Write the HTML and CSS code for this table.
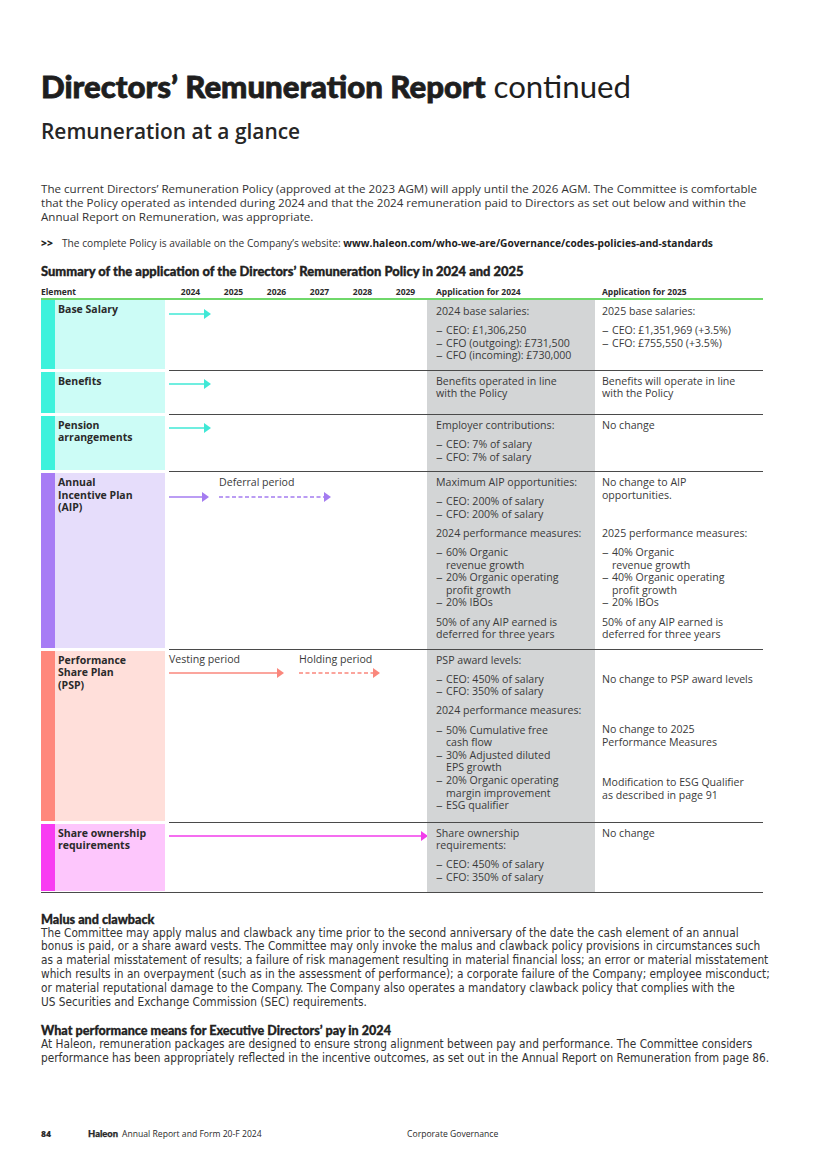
FILE: index.html
```html
<!DOCTYPE html>
<html lang="en">
<head>
<meta charset="utf-8">
<title>Directors’ Remuneration Report continued</title>
<link rel="stylesheet" href="styles.css">
</head>
<body>
<div class="page">
  <h1 class="title"><span class="title-bold">Directors’ Remuneration Report</span> continued</h1>
  <h2 class="subtitle">Remuneration at a glance</h2>
  <p class="intro">The current Directors’ Remuneration Policy (approved at the 2023 AGM) will apply until the 2026 AGM. The Committee is comfortable that the Policy operated as intended during 2024 and that the 2024 remuneration paid to Directors as set out below and within the Annual Report on Remuneration, was appropriate.</p>
  <p class="link-line"><span class="chev">&gt;&gt;</span><span>The complete Policy is available on the Company’s website: <b>www.haleon.com/who-we-are/Governance/codes-policies-and-standards</b></span></p>

  <h3 class="table-title">Summary of the application of the Directors’ Remuneration Policy in 2024 and 2025</h3>

  <div class="policy">
    <div class="head">
      <div class="h-el">Element</div>
      <div class="h-years"><span>2024</span><span>2025</span><span>2026</span><span>2027</span><span>2028</span><span>2029</span></div>
      <div class="h-app">Application for 2024</div>
      <div class="h-app h-app--r">Application for 2025</div>
    </div>

    <!-- Base salary -->
    <div class="row row--first teal">
      <div class="label">Base Salary</div>
      <div class="timeline">
        <div class="segs">
          <div class="seg"><svg class="arrow" width="42" height="10" viewBox="0 0 42 10"><line x1="0" y1="5" x2="36" y2="5" stroke="currentColor" stroke-width="1.5"/><polygon points="35,0 42,5 35,10" fill="currentColor"/></svg></div>
        </div>
      </div>
      <div class="apps">
        <div class="c"><p>2024 base salaries:</p><ul><li><span>CEO: £1,306,250</span></li><li><span>CFO (outgoing): £731,500</span></li><li><span>CFO (incoming): £730,000</span></li></ul></div>
        <div class="c c--r"><p>2025 base salaries:</p><ul><li><span>CEO: £1,351,969 (+3.5%)</span></li><li><span>CFO: £755,550 (+3.5%)</span></li></ul></div>
      </div>
    </div>

    <!-- Benefits -->
    <div class="row row--benefits teal">
      <div class="label">Benefits</div>
      <div class="timeline">
        <div class="segs">
          <div class="seg"><svg class="arrow" width="42" height="10" viewBox="0 0 42 10"><line x1="0" y1="5" x2="36" y2="5" stroke="currentColor" stroke-width="1.5"/><polygon points="35,0 42,5 35,10" fill="currentColor"/></svg></div>
        </div>
      </div>
      <div class="apps">
        <div class="c"><p>Benefits operated in line<br>with the Policy</p></div>
        <div class="c c--r"><p>Benefits will operate in line<br>with the Policy</p></div>
      </div>
    </div>

    <!-- Pension -->
    <div class="row teal">
      <div class="label">Pension<br>arrangements</div>
      <div class="timeline">
        <div class="segs">
          <div class="seg"><svg class="arrow" width="42" height="10" viewBox="0 0 42 10"><line x1="0" y1="5" x2="36" y2="5" stroke="currentColor" stroke-width="1.5"/><polygon points="35,0 42,5 35,10" fill="currentColor"/></svg></div>
        </div>
      </div>
      <div class="apps">
        <div class="c"><p>Employer contributions:</p><ul><li><span>CEO: 7% of salary</span></li><li><span>CFO: 7% of salary</span></li></ul></div>
        <div class="c c--r"><p>No change</p></div>
      </div>
    </div>

    <!-- AIP -->
    <div class="row purple">
      <div class="label">Annual<br>Incentive Plan<br>(AIP)</div>
      <div class="timeline timeline--labelled timeline--aip">
        <div class="segs">
          <div class="seg"><svg class="arrow" width="40" height="10" viewBox="0 0 40 10"><line x1="0" y1="5" x2="34" y2="5" stroke="currentColor" stroke-width="1.5"/><polygon points="33,0 40,5 33,10" fill="currentColor"/></svg></div>
          <div class="seg seg--deferral"><span class="seg-label">Deferral period</span><svg class="arrow" width="112" height="10" viewBox="0 0 112 10"><line x1="0" y1="5" x2="106" y2="5" stroke="currentColor" stroke-width="1.5" stroke-dasharray="4 2.5"/><polygon points="105,0 112,5 105,10" fill="currentColor"/></svg></div>
        </div>
      </div>
      <div class="apps">
        <div class="c"><p>Maximum AIP opportunities:</p><ul><li><span>CEO: 200% of salary</span></li><li><span>CFO: 200% of salary</span></li></ul></div>
        <div class="c c--r"><p>No change to AIP<br>opportunities.</p></div>
        <div class="c"><p>2024 performance measures:</p><ul><li><span>60% Organic<br>revenue growth</span></li><li><span>20% Organic operating<br>profit growth</span></li><li><span>20% IBOs</span></li></ul></div>
        <div class="c c--r"><p>2025 performance measures:</p><ul><li><span>40% Organic<br>revenue growth</span></li><li><span>40% Organic operating<br>profit growth</span></li><li><span>20% IBOs</span></li></ul></div>
        <div class="c"><p>50% of any AIP earned is<br>deferred for three years</p></div>
        <div class="c c--r"><p>50% of any AIP earned is<br>deferred for three years</p></div>
      </div>
    </div>

    <!-- PSP -->
    <div class="row row--psp salmon">
      <div class="label">Performance<br>Share Plan<br>(PSP)</div>
      <div class="timeline timeline--labelled">
        <div class="segs">
          <div class="seg"><span class="seg-label">Vesting period</span><svg class="arrow" width="115" height="10" viewBox="0 0 115 10"><line x1="0" y1="5" x2="109" y2="5" stroke="currentColor" stroke-width="1.5"/><polygon points="108,0 115,5 108,10" fill="currentColor"/></svg></div>
          <div class="seg seg--holding"><span class="seg-label">Holding period</span><svg class="arrow" width="81" height="10" viewBox="0 0 81 10"><line x1="0" y1="5" x2="75" y2="5" stroke="currentColor" stroke-width="1.5" stroke-dasharray="4 2.5"/><polygon points="74,0 81,5 74,10" fill="currentColor"/></svg></div>
        </div>
      </div>
      <div class="apps">
        <div class="c"><p>PSP award levels:</p><ul><li><span>CEO: 450% of salary</span></li><li><span>CFO: 350% of salary</span></li></ul></div>
        <div class="c c--r"><p class="offset">No change to PSP award levels</p></div>
        <div class="c"><p>2024 performance measures:</p><ul><li><span>50% Cumulative free<br>cash flow</span></li><li><span>30% Adjusted diluted<br>EPS growth</span></li><li><span>20% Organic operating<br>margin improvement</span></li><li><span>ESG qualifier</span></li></ul></div>
        <div class="c c--r"><p class="offset">No change to 2025<br>Performance Measures</p><p class="offset-lg">Modification to ESG Qualifier<br>as described in page 91</p></div>
      </div>
    </div>

    <!-- Share ownership -->
    <div class="row pink">
      <div class="label">Share ownership<br>requirements</div>
      <div class="timeline">
        <div class="segs">
          <div class="seg"><svg class="arrow" width="259" height="10" viewBox="0 0 259 10"><line x1="0" y1="5" x2="253" y2="5" stroke="currentColor" stroke-width="1.5"/><polygon points="252,0 259,5 252,10" fill="currentColor"/></svg></div>
        </div>
      </div>
      <div class="apps">
        <div class="c"><p>Share ownership<br>requirements:</p><ul><li><span>CEO: 450% of salary</span></li><li><span>CFO: 350% of salary</span></li></ul></div>
        <div class="c c--r"><p>No change</p></div>
      </div>
    </div>
  </div>

  <section class="note">
    <h4 class="note-title">Malus and clawback</h4>
    <p class="note-text">The Committee may apply malus and clawback any time prior to the second anniversary of the date the cash element of an annual bonus is paid, or a share award vests. The Committee may only invoke the malus and clawback policy provisions in circumstances such as a material misstatement of results; a failure of risk management resulting in material financial loss; an error or material misstatement which results in an overpayment (such as in the assessment of performance); a corporate failure of the Company; employee misconduct; or material reputational damage to the Company. The Company also operates a mandatory clawback policy that complies with the US&nbsp;Securities and Exchange Commission (SEC) requirements.</p>
  </section>
  <section class="note note--second">
    <h4 class="note-title">What performance means for Executive Directors’ pay in 2024</h4>
    <p class="note-text">At Haleon, remuneration packages are designed to ensure strong alignment between pay and performance. The Committee considers performance has been appropriately reflected in the incentive outcomes, as set out in the Annual Report on Remuneration from page 86.</p>
  </section>

  <footer class="footer">
    <span class="pg">84</span>
    <span class="brand">Haleon</span>
    <span class="report">Annual Report and Form 20-F 2024</span>
    <span class="section">Corporate Governance</span>
  </footer>
</div>
</body>
</html>
```

FILE: styles.css
```css
* { box-sizing: border-box; margin: 0; padding: 0; }

html, body { background: #ffffff; }

body {
  font-family: "Open Sans", "Noto Sans", sans-serif;
  color: #333333;
}

.page {
  width: 825px;
  height: 1168px;
  padding: 68px 40px 28px 41px;
  display: flex;
  flex-direction: column;
}

.title {
  font-family: "Lato", "Open Sans", sans-serif;
  font-weight: 400;
  font-size: 31.2px;
  line-height: 36px;
  color: #1e1e1e;
  white-space: nowrap;
}
.title-bold {
  font-weight: 900;
  -webkit-text-stroke: 0.8px #1e1e1e;
}

.subtitle {
  margin-top: 14px;
  font-family: "Open Sans", sans-serif;
  font-weight: 600;
  font-size: 20.9px;
  line-height: 26px;
  color: #262626;
}

.intro {
  margin-top: 38px;
  width: 724px;
  font-size: 11.6px;
  line-height: 14px;
  color: #333;
}

.link-line {
  margin-top: 12px;
  display: flex;
  font-size: 10.2px;
  line-height: 14px;
  color: #333;
}
.link-line b { font-weight: 700; color: #222; }
.chev { width: 21px; font-weight: 800; color: #222; }

.table-title {
  margin-top: 14px;
  font-family: "Lato", sans-serif;
  font-weight: 900;
  font-size: 12.95px;
  line-height: 14px;
  color: #222;
  -webkit-text-stroke: 0.35px #222;
}

/* ---------- table ---------- */
.policy {
  margin-top: 7px;
  width: 722px;
  border-bottom: 1.5px solid #4a4a4a;
  font-size: 10.6px;
  line-height: 12.6px;
  color: #3a3a3a;
}

.head {
  display: grid;
  grid-template-columns: 128px 258px 168px 168px;
  height: 15px;
  border-bottom: 2px solid #6fd86a;
  font-size: 8.5px;
  line-height: 13px;
  font-weight: 700;
  color: #2a2a2a;
}
.h-years { display: grid; grid-template-columns: repeat(6, 43px); text-align: center; }
.h-app { padding-left: 9px; }
.h-app--r { padding-left: 7px; }

.row {
  display: grid;
  grid-template-columns: 124px 262px 336px;
}
.teal { --strip: #3ef2dc; --light: #ccfcf6; --arrow: #40e8d6; }
.purple { --strip: #a77cf5; --light: #e6ddfb; --arrow: #a47cf0; }
.salmon { --strip: #ff887c; --light: #ffdfda; --arrow: #fa877c; }
.pink { --strip: #f83bf2; --light: #fdc6fc; --arrow: #f23deb; }

.label {
  margin: 2px 0 1px;
  border-left: 14px solid var(--strip);
  background: var(--light);
  padding: 3px 6px 0 3px;
  font-weight: 700;
  font-size: 10.5px;
  line-height: 12.5px;
  color: #2a2a2a;
}

.timeline {
  margin-left: 4px;
  border-top: 1px solid #4a4a4a;
  padding-top: 8px;
  color: var(--arrow);
}
.timeline--labelled { padding-top: 3px; }
.timeline--aip { padding-top: 4px; }
.timeline--aip .seg-label { margin-bottom: 3px; }

.segs { display: flex; align-items: flex-end; }
.seg { display: flex; flex-direction: column; }
.seg-label {
  font-size: 10.6px;
  line-height: 13px;
  color: #3a3a3a;
  white-space: nowrap;
  margin-bottom: 2px;
}
.arrow { display: block; overflow: visible; }
.seg--deferral { margin-left: 10px; }
.seg--holding { margin-left: 15px; }

.apps {
  border-top: 1px solid #4a4a4a;
  display: grid;
  grid-template-columns: 168px 168px;
  row-gap: 6.5px;
  align-content: start;
  padding: 4px 0 8px;
  background: linear-gradient(90deg, #d3d5d6 0, #d3d5d6 168px, #ffffff 168px);
}

.row--first .label { margin-top: 0; }
.row--first .timeline,
.row--first .apps { border-top: 0; }
.row--first .timeline { padding-top: 9px; }
.row--first .apps { padding-top: 5px; }
.row--benefits { min-height: 44px; }
.row--psp .apps { padding-bottom: 10px; }

.c { padding: 0 4px 0 9px; }
.c--r { padding-left: 7px; }
.c ul { list-style: none; margin-top: 6.5px; }
.c li { display: flex; }
.c li::before { content: "–"; flex: 0 0 10px; transform: scaleX(1.25); transform-origin: left center; }
.offset { margin-top: 19px; }
.offset-lg { margin-top: 27.5px; }

/* ---------- notes ---------- */
.note { margin-top: 20px; }
.note--second { margin-top: 15px; }
.note-title {
  font-family: "Lato", sans-serif;
  font-weight: 900;
  font-size: 12.6px;
  line-height: 14px;
  color: #222;
  -webkit-text-stroke: 0.3px #222;
}
.note-text {
  width: 730px;
  font-family: "Liberation Sans Narrow", "DejaVu Sans Condensed", sans-serif;
  font-size: 11.75px;
  line-height: 13.8px;
  color: #333;
}

/* ---------- footer ---------- */
.footer {
  margin-top: auto;
  display: flex;
  align-items: baseline;
  font-size: 8.6px;
  line-height: 12px;
  color: #2a2a2a;
}
.pg { width: 47px; font-weight: 800; }
.brand { font-family: "Lato", sans-serif; font-weight: 900; font-size: 9.4px; margin-right: 4px; -webkit-text-stroke: 0.25px #2a2a2a; }
.report { width: 285px; }
```
